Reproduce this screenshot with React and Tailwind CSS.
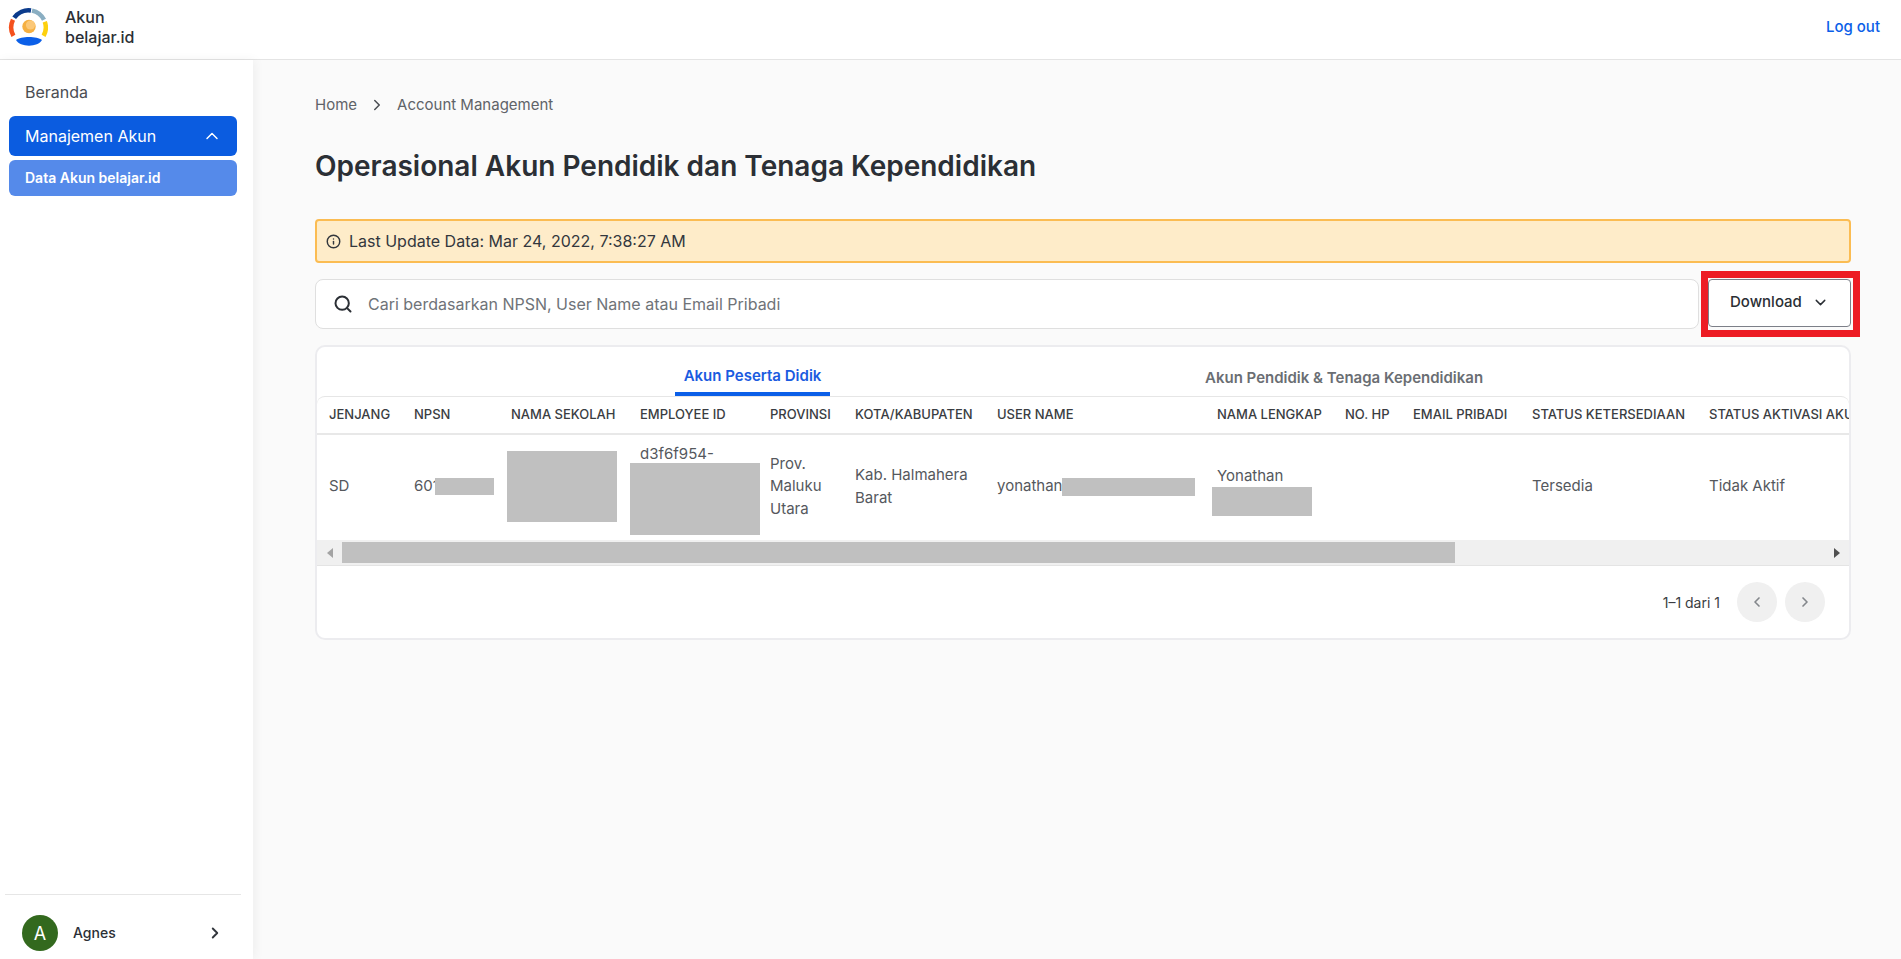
import { ChevronUp, ChevronDown, ChevronRight, ChevronLeft, Search, Info } from 'lucide-react';

function Logo() {
  return (
    <svg width="40" height="40" viewBox="0 0 40 40" fill="none" className="self-start mt-[7px]">
      <path d="M6.2 10.8 A17.3 17.3 0 0 1 23 3.4" stroke="#0b3b8c" strokeWidth="4.5" />
      <path d="M24 3.6 A17.3 17.3 0 0 1 36 12.8" stroke="#8aaec2" strokeWidth="4.5" />
      <path d="M36.8 14.7 A17.3 17.3 0 0 1 35.6 28.9" stroke="#fdd00e" strokeWidth="4.5" />
      <path d="M5 12.8 A17.3 17.3 0 0 0 5.4 28.9" stroke="#f4511e" strokeWidth="4.5" />
      <circle cx="21" cy="19.5" r="6.7" fill="#f5b042" />
      <circle cx="22.5" cy="18" r="4.6" fill="#fbc878" />
      <path d="M8 33 C13 29 29 29 34 33 C30 40.5 12 40.5 8 33 Z" fill="#0b5fe8" />
    </svg>
  );
}

const cols = [
  ['JENJANG', 84],
  ['NPSN', 97],
  ['NAMA SEKOLAH', 129],
  ['EMPLOYEE ID', 130],
  ['PROVINSI', 85],
  ['KOTA/KABUPATEN', 142],
  ['USER NAME', 220],
  ['NAMA LENGKAP', 128],
  ['NO. HP', 68],
  ['EMAIL PRIBADI', 119],
  ['STATUS KETERSEDIAAN', 177],
  ['STATUS AKTIVASI AKUN', 180],
];

function App() {
  return (
    <div className="h-[959px] overflow-hidden flex flex-col bg-[#fafafa] text-[#2e3238] font-['Inter',sans-serif] relative">
      <header className="h-[60px] shrink-0 bg-white border-b border-[#e4e4e4] flex items-center pl-[8px] pr-[21px]">
        <Logo />
        <div className="ml-[17px] mb-[5px] text-[16px] leading-[20px] font-medium text-[#2b2f35]">
          <div>Akun</div>
          <div>belajar.id</div>
        </div>
        <a className="ml-auto mb-[5px] text-[15px] font-medium text-[#0b5fe8]">Log out</a>
      </header>

      <div className="flex flex-1 min-h-0">
        <aside className="w-[253px] shrink-0 bg-white shadow-[2px_0_10px_rgba(0,0,0,0.05)] flex flex-col pl-[9px] pr-[16px]">
          <div className="h-[56px] pt-[8px] flex items-center pl-[16px] text-[16px] text-[#4a4d52]">Beranda</div>
          <div className="h-[40px] rounded-[6px] bg-[#0b5ce0] text-white flex items-center justify-between pl-[16px] pr-[15px] text-[16px]">
            Manajemen Akun
            <ChevronUp size={20} strokeWidth={1.75} />
          </div>
          <div className="mt-[4px] h-[36px] pb-[2px] rounded-[6px] bg-[#558aea] text-white flex items-center pl-[16px] text-[14px] font-semibold">
            Data Akun belajar.id
          </div>
          <div className="mt-auto -ml-[4px] mr-[-4px] border-t border-[#e6e6e6] h-[65px] flex items-start pt-[20px] pl-[17px] pr-[17px]">
            <div className="w-[36px] h-[36px] rounded-full bg-[#33691e] text-white flex items-center justify-center text-[18px]">A</div>
            <span className="ml-[15px] leading-[36px] text-[14px] font-medium text-[#2b2f35]">Agnes</span>
            <ChevronRight size={18} strokeWidth={2.5} className="ml-auto mt-[9px] text-[#33373d]" />
          </div>
        </aside>

        <main className="flex-1 min-w-0 pl-[62px] pr-[50px]">
          <div className="mt-[35px] flex items-center text-[15px] leading-[20px] text-[#5f6368]">
            <span>Home</span>
            <ChevronRight size={18} strokeWidth={2} className="mx-[11px] text-[#4a4d52]" />
            <span>Account Management</span>
          </div>
          <h1 className="mt-[31px] text-[28px] leading-[40px] font-semibold text-[#2b2f35]">
            Operasional Akun Pendidik dan Tenaga Kependidikan
          </h1>

          <div className="mt-[33px] h-[44px] rounded-[4px] border-2 border-[#fbbc52] bg-[#feecc9] flex items-center pl-[9px] text-[16px] text-[#33373d]">
            <Info size={15} strokeWidth={2.3} />
            <span className="ml-[8px]">Last Update Data: Mar 24, 2022, 7:38:27 AM</span>
          </div>

          <div className="mt-[16px] flex items-start gap-[9px]">
            <div className="flex-1 h-[50px] rounded-[8px] border border-[#dfdfdf] bg-white flex items-center pl-[17px] text-[16px] text-[#6f7378]">
              <Search size={20} strokeWidth={2.4} className="text-[#2b2f35]" />
              <span className="ml-[15px]">Cari berdasarkan NPSN, User Name atau Email Pribadi</span>
            </div>
            <button className="w-[143px] h-[48px] pb-[2px] rounded-[4px] border border-[#7c7f88] bg-white flex items-center pl-[21px] text-[15px] font-medium text-[#2b2f35]">
              Download
              <ChevronDown size={17} strokeWidth={2} className="ml-[10px]" />
            </button>
          </div>

          <section className="mt-[16px] h-[295px] rounded-[10px] border-2 border-[#ececef] bg-white flex flex-col">
            <div className="h-[49px] shrink-0 flex items-end pl-[358px]">
              <div className="w-[155px] h-[47px] border-b-4 border-[#0b5fe8] flex items-center justify-center pt-[12px] text-[15px] font-semibold text-[#1a5be0]">
                Akun Peserta Didik
              </div>
              <div className="ml-[375px] h-[47px] flex items-center pt-[12px] text-[15px] font-semibold text-[#6a6e73]">
                Akun Pendidik &amp; Tenaga Kependidikan
              </div>
            </div>

            <div className="rounded-t-[8px] border-t border-[#e6e6e6] overflow-hidden">
              <table className="table-fixed w-[1559px] text-left">
                <colgroup>
                  {cols.map(([name, width]) => (
                    <col key={name} style={{ width }} />
                  ))}
                </colgroup>
                <thead>
                  <tr className="h-[37px] border-b-2 border-[#e8e8e8]">
                    {cols.map(([name]) => (
                      <th key={name} className="pl-[13px] first:pl-[12px] text-[13px] font-medium text-[#3a3d42] whitespace-nowrap">{name}</th>
                    ))}
                  </tr>
                </thead>
                <tbody>
                  <tr className="h-[106px] text-[15px] leading-[22.5px] text-[#55585d] [&>td]:pb-[2px]">
                    <td className="pl-[12px]">SD</td>
                    <td className="pl-[13px]">
                      <div className="flex items-center">601<div className="w-[59px] h-[17px] bg-[#c0c0c0] -ml-[4px]" /></div>
                    </td>
                    <td>
                      <div className="w-[110px] h-[71px] bg-[#c0c0c0] ml-[9px]" />
                    </td>
                    <td className="pl-[13px]">
                      d3f6f954-
                      <div className="w-[130px] h-[72px] bg-[#c0c0c0] -ml-[10px] -mt-[3px] -mb-[5px]" />
                    </td>
                    <td className="pl-[13px]">Prov. Maluku Utara</td>
                    <td className="pl-[13px]">Kab. Halmahera Barat</td>
                    <td className="pl-[13px]">
                      <div className="flex items-center">yonathan<div className="w-[133px] h-[18px] bg-[#c0c0c0]" /></div>
                    </td>
                    <td className="pl-[13px]">
                      <div className="pt-[8px]">
                        Yonathan
                        <div className="w-[100px] h-[29px] bg-[#c0c0c0] -ml-[5px]" />
                      </div>
                    </td>
                    <td className="pl-[13px]"></td>
                    <td className="pl-[13px]"></td>
                    <td className="pl-[13px]">Tersedia</td>
                    <td className="pl-[13px]">Tidak Aktif</td>
                  </tr>
                </tbody>
              </table>
            </div>

            <div className="h-[26px] shrink-0 bg-[#f0f0f0] border-b border-[#e4e4e4] flex items-center">
              <div className="w-[25px] flex justify-center">
                <div className="border-y-[5px] border-y-transparent border-r-[6px] border-r-[#a3a3a3]" />
              </div>
              <div className="w-[1113px] h-[21px] bg-[#c0c0c0]" />
              <div className="ml-auto w-[24px] flex justify-center">
                <div className="border-y-[5px] border-y-transparent border-l-[6px] border-l-[#505050]" />
              </div>
            </div>

            <div className="flex-1 flex items-center justify-end pr-[24px]">
              <span className="text-[14px] text-[#3a3d42]">1–1 dari 1</span>
              <button className="ml-[17px] w-[40px] h-[40px] rounded-full bg-[#f0f0f0] flex items-center justify-center text-[#84878c]">
                <ChevronLeft size={16} strokeWidth={2.5} />
              </button>
              <button className="ml-[8px] w-[40px] h-[40px] rounded-full bg-[#f0f0f0] flex items-center justify-center text-[#84878c]">
                <ChevronRight size={16} strokeWidth={2.5} />
              </button>
            </div>
          </section>
        </main>
      </div>

      {/* annotation around the download button */}
      <div className="absolute left-[1701px] top-[271px] w-[159px] h-[66px] border-[7px] border-[#ed1c24] pointer-events-none" />
    </div>
  );
}

export default App;
